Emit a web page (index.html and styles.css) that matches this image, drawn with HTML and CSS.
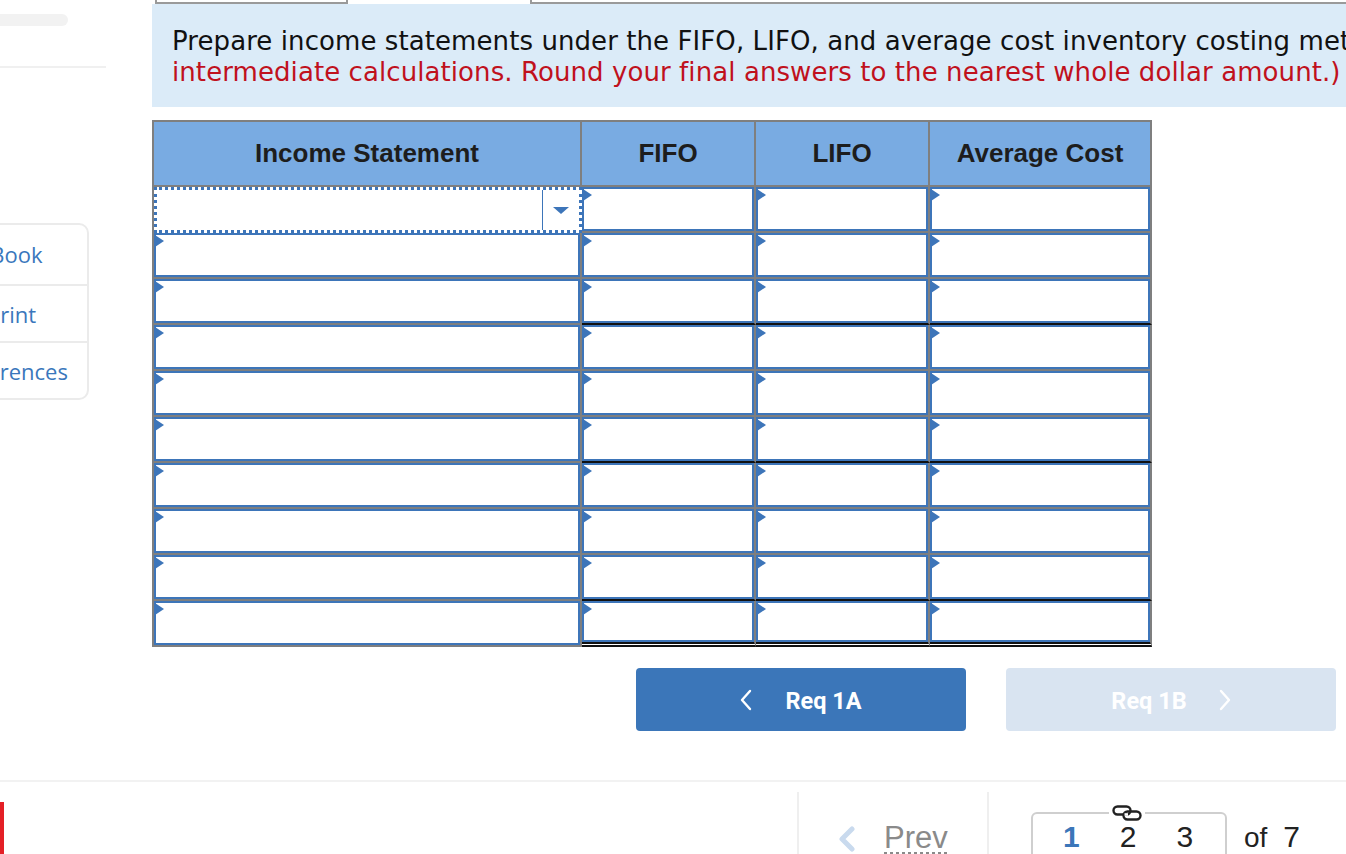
FILE: index.html
```html
<!DOCTYPE html>
<html lang="en">
<head>
<meta charset="utf-8">
<title>Income Statement</title>
<link rel="stylesheet" href="styles.css">
</head>
<body>
<div class="page">
  <div class="top">
    <aside class="side">
      <div class="pill"></div>
      <div class="rule"></div>
      <div class="card">
        <div class="item item-ebook">eBook</div>
        <div class="item item-print">Print</div>
        <div class="item item-refs">References</div>
      </div>
    </aside>
    <main class="main">
      <div class="tabs">
        <div class="tab tab-a"></div>
        <div class="tab tab-b"></div>
        <div class="tab tab-c"></div>
      </div>
      <p class="prompt"><span class="q">Prepare income statements under the FIFO, LIFO, and average cost inventory costing methods. <span class="note">(Do not round</span></span><br><span class="note">intermediate calculations. Round your final answers to the nearest whole dollar amount.)</span></p>
      <table class="sheet">
        <thead>
          <tr>
            <th class="c1">Income Statement</th>
            <th class="c2">FIFO</th>
            <th class="c3">LIFO</th>
            <th class="c4">Average Cost</th>
          </tr>
        </thead>
        <tbody>
          <tr>
            <td class="sel"><div class="dd"><div class="dd-field"></div><div class="dd-btn"><span class="caret"></span></div></div></td>
            <td class="v"><div class="inp"></div></td><td class="v"><div class="inp"></div></td><td class="v"><div class="inp"></div></td>
          </tr>
          <tr>
            <td><div class="inp"></div></td>
            <td class="v"><div class="inp"></div></td><td class="v"><div class="inp"></div></td><td class="v"><div class="inp"></div></td>
          </tr>
          <tr class="sub">
            <td><div class="inp"></div></td>
            <td class="v"><div class="inp"></div></td><td class="v"><div class="inp"></div></td><td class="v"><div class="inp"></div></td>
          </tr>
          <tr>
            <td><div class="inp"></div></td>
            <td class="v"><div class="inp"></div></td><td class="v"><div class="inp"></div></td><td class="v"><div class="inp"></div></td>
          </tr>
          <tr>
            <td><div class="inp"></div></td>
            <td class="v"><div class="inp"></div></td><td class="v"><div class="inp"></div></td><td class="v"><div class="inp"></div></td>
          </tr>
          <tr class="sub">
            <td><div class="inp"></div></td>
            <td class="v"><div class="inp"></div></td><td class="v"><div class="inp"></div></td><td class="v"><div class="inp"></div></td>
          </tr>
          <tr>
            <td><div class="inp"></div></td>
            <td class="v"><div class="inp"></div></td><td class="v"><div class="inp"></div></td><td class="v"><div class="inp"></div></td>
          </tr>
          <tr>
            <td><div class="inp"></div></td>
            <td class="v"><div class="inp"></div></td><td class="v"><div class="inp"></div></td><td class="v"><div class="inp"></div></td>
          </tr>
          <tr class="sub">
            <td><div class="inp"></div></td>
            <td class="v"><div class="inp"></div></td><td class="v"><div class="inp"></div></td><td class="v"><div class="inp"></div></td>
          </tr>
          <tr class="total">
            <td><div class="inp"></div></td>
            <td class="v"><div class="inp"></div></td><td class="v"><div class="inp"></div></td><td class="v"><div class="inp"></div></td>
          </tr>
        </tbody>
      </table>
      <div class="steps">
        <button class="btn btn-prev" type="button">
          <svg class="chev" width="12" height="22" viewBox="0 0 12 22"><path d="M10 2 L2 11 L10 20" fill="none" stroke="#fff" stroke-width="2.4" stroke-linecap="round" stroke-linejoin="round"/></svg>
          <span>Req 1A</span>
        </button>
        <button class="btn btn-next" type="button">
          <span>Req 1B</span>
          <svg class="chev" width="12" height="22" viewBox="0 0 12 22"><path d="M2 2 L10 11 L2 20" fill="none" stroke="#fff" stroke-width="2.4" stroke-linecap="round" stroke-linejoin="round"/></svg>
        </button>
      </div>
    </main>
  </div>
  <footer class="foot">
    <div class="red"></div>
    <div class="prev">
      <svg class="prev-chev" width="18" height="26" viewBox="0 0 18 26"><path d="M14 3 L4 13 L14 23" fill="none" stroke="#c9daee" stroke-width="5" stroke-linecap="round" stroke-linejoin="round"/></svg>
      <span class="prev-text">Prev</span>
    </div>
    <div class="pager">
      <span class="link"><svg width="32" height="18" viewBox="0 0 32 18"><rect x="2.5" y="2.5" width="17" height="8" rx="4" fill="none" stroke="#222" stroke-width="2.4"/><rect x="12.5" y="7.5" width="17" height="8" rx="4" fill="none" stroke="#222" stroke-width="2.4"/><path d="M13.5 10.5 L17 10.5" stroke="#fff" stroke-width="2.6"/></svg></span>
      <span class="num cur">1</span>
      <span class="num">2</span>
      <span class="num">3</span>
    </div>
    <div class="of">of <span class="total-n">7</span></div>
  </footer>
</div>
</body>
</html>
```
FILE: styles.css
```css
* { box-sizing: border-box; }
html, body { margin: 0; padding: 0; }
body {
  width: 1346px;
  height: 854px;
  overflow: hidden;
  background: #fff;
  font-family: "Liberation Sans", Arial, sans-serif;
}
.page { display: flex; flex-direction: column; height: 854px; }
.top { display: flex; height: 780px; flex-shrink: 0; }

/* sidebar */
.side { width: 152px; flex-shrink: 0; }
.pill { margin: 14px 0 0 -20px; width: 88px; height: 12px; border-radius: 6px; background: #f2f2f2; }
.rule { margin-top: 40px; width: 106px; height: 2px; background: #f0f0f0; }
.card {
  margin: 155px 0 0 -70px;
  width: 159px;
  border: 2px solid #ebebeb;
  border-radius: 10px;
  font-family: "Open Sans", Lato, sans-serif;
  font-size: 22px;
  color: #3a77bc;
}
.item { height: 57px; display: flex; align-items: center; border-top: 2px solid #ebebeb; white-space: nowrap; }
.item:first-child { border-top: none; height: 59px; padding-bottom: 2px; }
.item-ebook { padding-left: 46px; }
.item-print { padding-left: 55px; }
.item-refs { padding-left: 22px; }

/* main */
.main { flex: 1; min-width: 0; overflow: hidden; }
.tabs { display: flex; height: 4px; padding-left: 3px; }
.tab { height: 4px; border: 2px solid #9a9a9a; border-top: none; }
.tab-a { width: 193px; }
.tab-b { width: 182px; border: none; }
.tab-c { flex: 1; border-right: none; }

.prompt {
  margin: 0;
  height: 103px;
  background: #dbebf8;
  padding: 22px 0 0 20px;
  white-space: nowrap;
  font-family: "DejaVu Sans", Verdana, sans-serif;
  font-size: 26px;
  letter-spacing: 0.08px;
  line-height: 31px;
  color: #111;
}
.note { color: #c0111d; }

/* table */
.sheet {
  margin-top: 13px;
  width: 1000px;
  table-layout: fixed;
  border-collapse: separate;
  border-spacing: 0;
  border-left: 2px solid #7f7f7f;
  border-top: 2px solid #7f7f7f;
}
.sheet th {
  height: 65px;
  padding: 0;
  background: #79abe2;
  border-right: 2px solid #7f7f7f;
  border-bottom: 2px solid #7f7f7f;
  font-family: "Liberation Sans", Arial, sans-serif;
  font-weight: bold;
  font-size: 26px;
  color: #1d1d1d;
  text-align: center;
}
.sheet .c1 { width: 428px; }
.sheet .c2 { width: 174px; }
.sheet .c3 { width: 174px; }
.sheet .c4 { width: 222px; }
.sheet td {
  padding: 0;
  border-right: 2px solid #7f7f7f;
  border-bottom: 2px solid #7f7f7f;
  vertical-align: top;
}
.inp {
  position: relative;
  height: 44px;
  border: 2px solid #3d75b9;
  background: #fff;
}
.inp::before {
  content: "";
  position: absolute;
  left: -1px;
  top: 0;
  border-left: 9px solid #3d75b9;
  border-top: 6px solid transparent;
  border-bottom: 6px solid transparent;
}
.sheet tr.sub td.v { border-bottom: 2px solid #111; }
.sheet tr.total td.v { border-bottom: 5px double #111; }
.sheet tr.total td.v .inp { height: 41px; }

.sheet td.sel { border-right: none; border-bottom: none; }
.dd {
  display: flex;
  height: 46px;
  border: 3px dotted #3d75b9;
  background: #fff;
}
.dd-field { flex: 1; }
.dd-btn {
  width: 37px;
  border-left: 1px solid #3d75b9;
  display: flex;
  align-items: center;
  justify-content: center;
}
.caret {
  width: 0;
  height: 0;
  border-top: 7px solid #3d75b9;
  border-left: 8px solid transparent;
  border-right: 8px solid transparent;
}

/* step buttons */
.steps { display: flex; gap: 40px; margin: 21px 0 0 484px; }
.btn {
  width: 330px;
  height: 63px;
  border: none;
  border-radius: 4px;
  display: flex;
  align-items: center;
  justify-content: center;
  gap: 33px;
  font-family: Roboto, "Liberation Sans", sans-serif;
  font-weight: bold;
  font-size: 23.5px;
  color: #fff;
  padding: 3px 0 0;
}
.btn-prev { background: #3b76b9; }
.btn-next { background: #d9e4f1; gap: 32px; }
.chev { display: block; margin-top: -3px; }

/* footer */
.foot {
  height: 74px;
  border-top: 2px solid #f2f2f2;
  display: flex;
  align-items: flex-start;
  font-family: "Liberation Sans", Arial, sans-serif;
}
.red { width: 4px; height: 60px; margin-top: 20px; background: #e41f26; }
.prev {
  margin: 10px 0 0 793px;
  width: 192px;
  height: 70px;
  border-left: 2px solid #efefef;
  border-right: 2px solid #efefef;
  display: flex;
  align-items: flex-start;
  padding: 35px 0 0 39px;
  gap: 28px;
}
.prev-chev { display: block; margin-top: -1px; }
.prev-text {
  font-size: 31px;
  line-height: 30px;
  margin-top: -4px;
  color: #8a8a8a;
  text-decoration: underline dotted #8a8a8a;
  text-underline-offset: 4px;
}
.pager {
  position: relative;
  margin: 30px 0 0 42px;
  width: 196px;
  height: 60px;
  border: 2px solid #cfcfcf;
  border-radius: 6px;
  display: flex;
  padding: 6px 0 0 30px;
  gap: 40px;
  font-size: 30px;
  line-height: 34px;
  color: #222;
}
.link {
  position: absolute;
  top: -10px;
  left: 76px;
  width: 36px;
  height: 18px;
  padding: 0 2px;
  background: #fff;
  line-height: 0;
}
.link svg { display: block; width: 32px; height: 18px; }
.num { display: block; }
.num.cur { color: #3b76b9; font-weight: bold; }
.of {
  margin: 38px 0 0 17px;
  font-size: 28px;
  line-height: 34px;
  color: #222;
}
.total-n { margin-left: 8px; font-size: 30px; }
```
